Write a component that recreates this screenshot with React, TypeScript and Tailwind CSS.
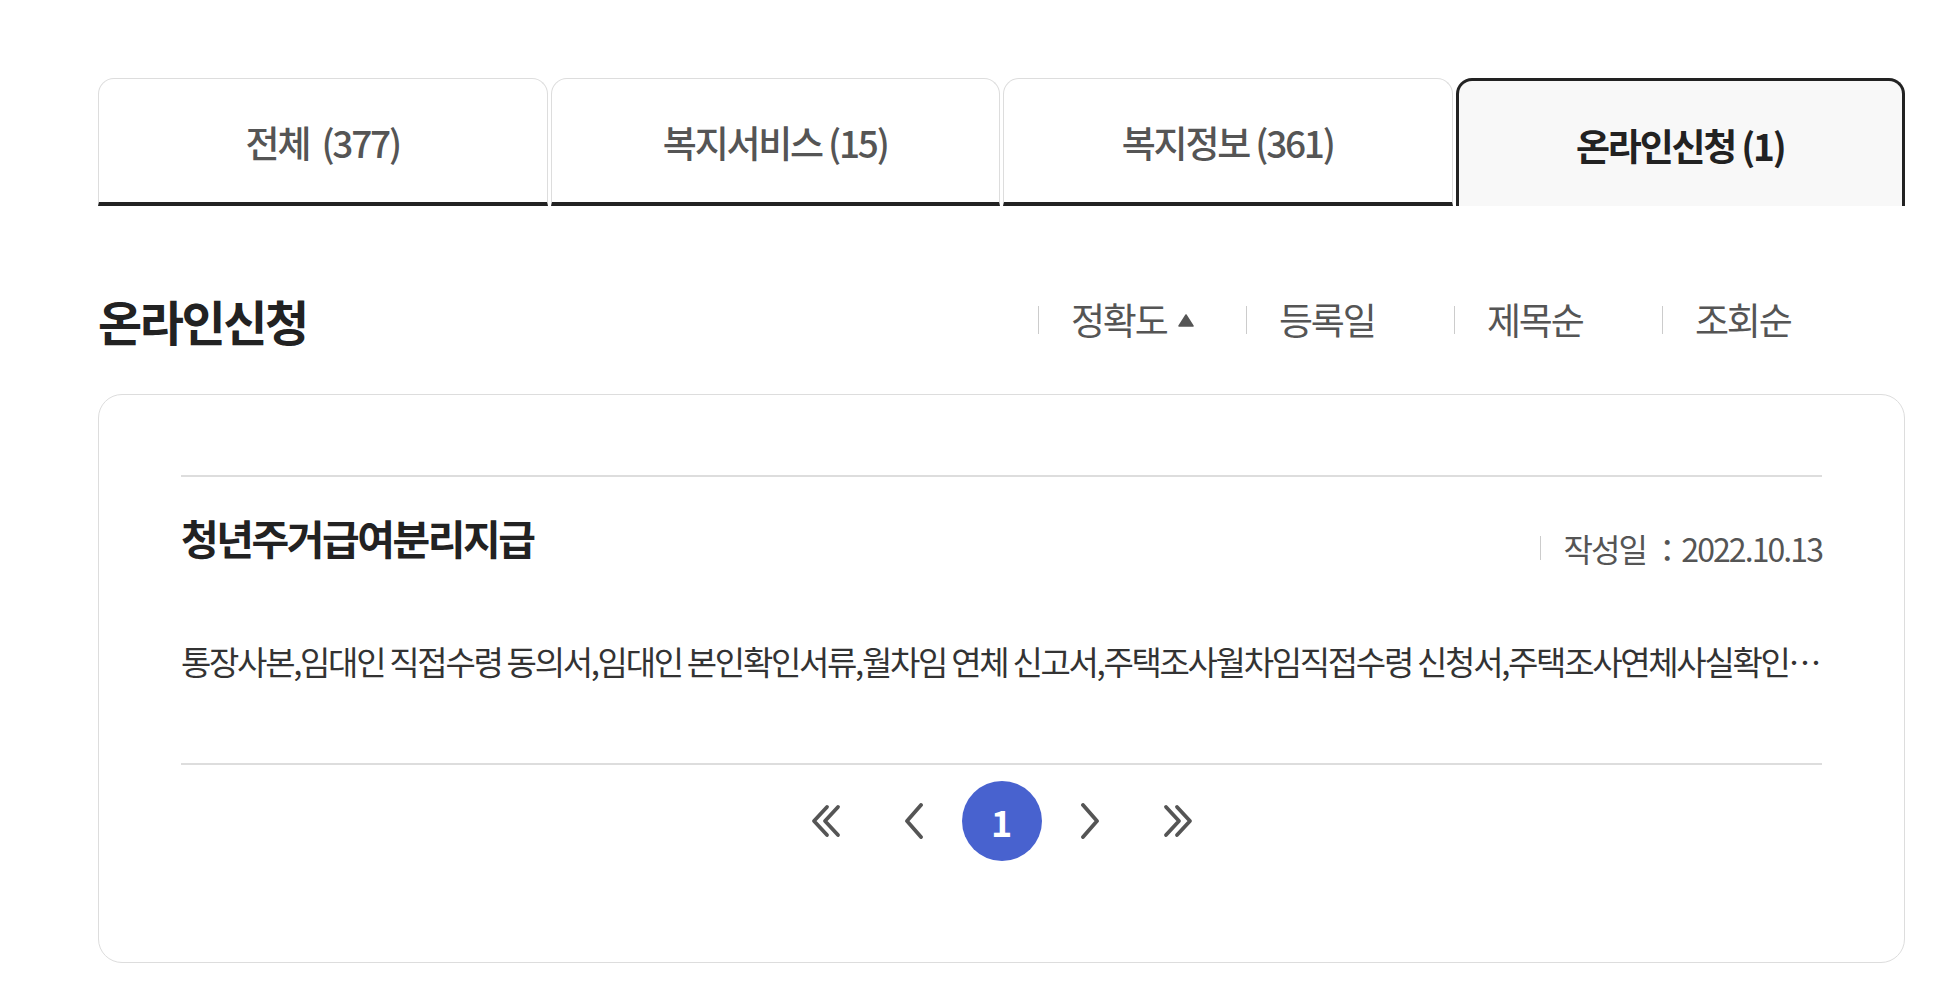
import { ReactNode } from 'react';

// ─── Data ───
const tabs = [
	{ label: '전체\u00a0\u00a0(377)', active: false },
	{ label: '복지서비스 (15)', active: false },
	{ label: '복지정보 (361)', active: false },
	{ label: '온라인신청 (1)', active: true },
];

const sorts = ['정확도', '등록일', '제목순', '조회순'];

const description =
	'통장사본,임대인 직접수령 동의서,임대인 본인확인서류,월차임 연체 신고서,주택조사월차임직접수령 신청서,주택조사연체사실확인서,임대차계약서 사본';

// ─── Icons ───
const stroke = { stroke: '#555', strokeWidth: 3.8, strokeLinecap: 'round' as const, strokeLinejoin: 'round' as const };

function Chevron({ dir, double }: { dir: 'left' | 'right'; double?: boolean }) {
	if (double) {
		return (
			<svg width="34" height="34" viewBox="0 0 34 34" fill="none">
				{dir === 'left' ? (
					<>
						<path d="M18 3 L5 17 L18 31" {...stroke} />
						<path d="M29 3 L16 17 L29 31" {...stroke} />
					</>
				) : (
					<>
						<path d="M5 3 L18 17 L5 31" {...stroke} />
						<path d="M16 3 L29 17 L16 31" {...stroke} />
					</>
				)}
			</svg>
		);
	}
	return (
		<svg width="22" height="36" viewBox="0 0 22 36" fill="none">
			<path d={dir === 'left' ? 'M18 2 L4 18 L18 34' : 'M4 2 L18 18 L4 34'} {...stroke} />
		</svg>
	);
}

function PageButton({ children }: { children: ReactNode }) {
	return <button className="flex h-[80px] w-[80px] items-center justify-center">{children}</button>;
}

// ─── App ───
export default function App() {
	return (
		<div className="min-h-screen bg-white [font-family:'Noto_Sans_CJK_KR','Noto_Sans',sans-serif]">
			<div className="ml-[98px] w-[1807px] pt-[78px]">
				{/* Tabs */}
				<div className="grid grid-cols-4 gap-[3px]">
					{tabs.map((tab) =>
						tab.active ? (
							<div
								key={tab.label}
								className="flex h-[128px] items-center justify-center rounded-t-[16px] border-[3px] border-b-0 border-[#222] bg-[#f8f8f8] pt-[4px] text-[37px] font-bold tracking-[-0.06em] text-[#222]"
							>
								{tab.label}
							</div>
						) : (
							<div
								key={tab.label}
								className="flex h-[128px] items-center justify-center rounded-t-[16px] border border-b-4 border-[#ddd] border-b-[#222] bg-white pt-[4px] text-[37px] font-medium tracking-[-0.06em] text-[#555]"
							>
								{tab.label}
							</div>
						)
					)}
				</div>

				{/* Heading + sort */}
				<div className="mt-[84px] mb-[44px] flex h-[60px] items-center justify-between">
					<h2 className="text-[48px] font-bold tracking-[-0.05em] text-[#222]">온라인신청</h2>
					<ul className="mr-[35px] flex">
						{sorts.map((s, i) => (
							<li key={s} className="flex w-[208px] items-center">
								<span className="h-[28px] w-px bg-[#ccc]" />
								<span className="ml-[32px] flex items-center gap-[12px] text-[37px] tracking-[-0.06em] text-[#555]">
									{s}
									{i === 0 && (
										<svg width="16" height="13" viewBox="0 0 16 13">
											<path d="M8 1 L15 12 L1 12 Z" fill="#555" stroke="#555" strokeWidth="1.5" strokeLinejoin="round" />
										</svg>
									)}
								</span>
							</li>
						))}
					</ul>
				</div>

				{/* Card */}
				<div className="rounded-[24px] border border-[#ddd] px-[82px] pt-[80px] pb-[101px]">
					<div className="border-t-2 border-b-2 border-[#ddd] pt-[38px] pb-[82px]">
						<div className="flex h-[46px] items-center justify-between">
							<h3 className="text-[41px] font-bold tracking-[-0.06em] text-[#222]">청년주거급여분리지급</h3>
							<div className="mt-[20px] flex items-center">
								<span className="h-[24px] w-px bg-[#ccc]" />
								<span className="ml-[22px] text-[32px] tracking-[-0.06em] text-[#555]">작성일 ：2022.10.13</span>
							</div>
						</div>
						<p className="mt-[80px] truncate text-[33px] leading-[40px] tracking-[-0.07em] text-[#333]">{description}</p>
					</div>

					{/* Pagination */}
					<div className="mt-[16px] flex items-center justify-center gap-[8px]">
						<PageButton>
							<Chevron dir="left" double />
						</PageButton>
						<PageButton>
							<Chevron dir="left" />
						</PageButton>
						<button className="flex h-[80px] w-[80px] items-center justify-center rounded-full bg-[#4862cf] text-[36px] font-bold text-white">
							1
						</button>
						<PageButton>
							<Chevron dir="right" />
						</PageButton>
						<PageButton>
							<Chevron dir="right" double />
						</PageButton>
					</div>
				</div>
			</div>
		</div>
	);
}
